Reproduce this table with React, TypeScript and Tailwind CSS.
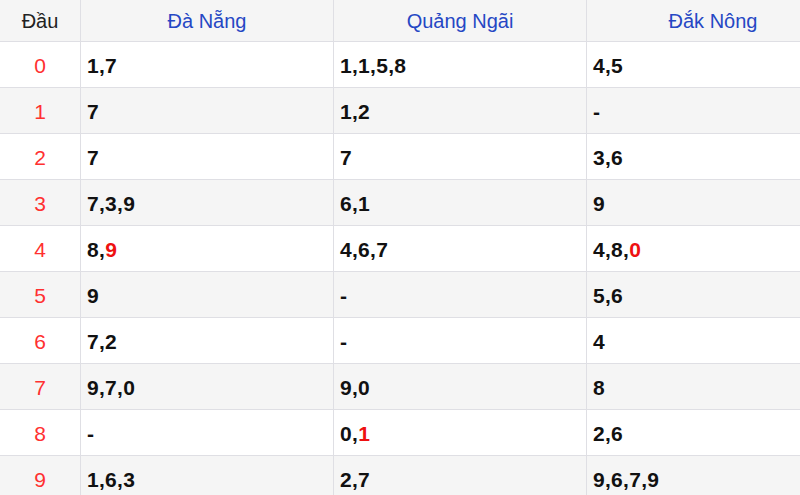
const rows: { d: string; cols: [string, string?][][] }[] = [
  { d: '0', cols: [[['1,7']], [['1,1,5,8']], [['4,5']]] },
  { d: '1', cols: [[['7']], [['1,2']], [['-']]] },
  { d: '2', cols: [[['7']], [['7']], [['3,6']]] },
  { d: '3', cols: [[['7,3,9']], [['6,1']], [['9']]] },
  { d: '4', cols: [[['8,'], ['9', 'r']], [['4,6,7']], [['4,8,'], ['0', 'r']]] },
  { d: '5', cols: [[['9']], [['-']], [['5,6']]] },
  { d: '6', cols: [[['7,2']], [['-']], [['4']]] },
  { d: '7', cols: [[['9,7,0']], [['9,0']], [['8']]] },
  { d: '8', cols: [[['-']], [['0,'], ['1', 'r']], [['2,6']]] },
  { d: '9', cols: [[['1,6,3']], [['2,7']], [['9,6,7,9']]] },
];

const headers = ['Đà Nẵng', 'Quảng Ngãi', 'Đắk Nông'];

export default function App() {
  return (
    <div className="w-[800px] h-[495px] overflow-hidden bg-white font-['Liberation_Sans',Arial,sans-serif]">
      <div className="w-[839px]">
        <div className="flex h-[42px] bg-[#f5f5f5] border-b border-[#dfdfe4]">
          <div className="w-[80px] flex items-center justify-center text-[20px] text-[#222]">Đầu</div>
          {headers.map((h) => (
            <div
              key={h}
              className="w-[253px] border-l border-[#dfdfe4] flex items-center justify-center text-[20px] text-[#2547c4]"
            >
              {h}
            </div>
          ))}
        </div>
        {rows.map((r, i) => (
          <div
            key={r.d}
            className={`flex h-[46px] border-b border-[#dfdfe4] ${i % 2 === 1 ? 'bg-[#f5f5f5]' : 'bg-white'}`}
          >
            <div className="w-[80px] flex items-center justify-center pt-[2px] text-[21px] text-[#ff3030]">{r.d}</div>
            {r.cols.map((c, j) => (
              <div
                key={j}
                className="w-[253px] border-l border-[#dfdfe4] flex items-center pl-[6px] pt-[2px] text-[21px] tracking-[0.3px] font-bold text-[#111]"
              >
                {c.map(([t, red], k) => (
                  <span key={k} className={red ? 'text-[#ee1111]' : ''}>
                    {t}
                  </span>
                ))}
              </div>
            ))}
          </div>
        ))}
      </div>
    </div>
  );
}
